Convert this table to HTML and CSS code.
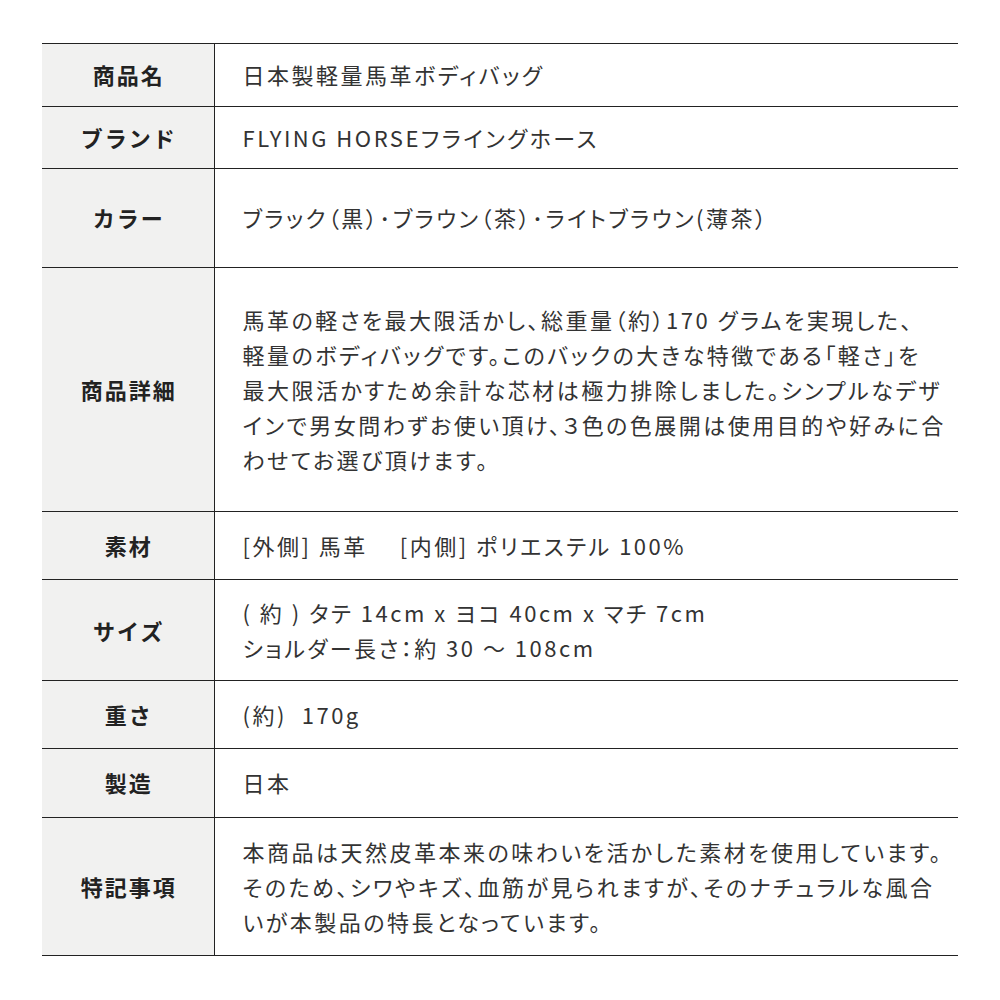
FILE: index.html
```html
<!DOCTYPE html>
<html lang="ja">
<head>
<meta charset="utf-8">
<title>商品仕様</title>
<link rel="stylesheet" href="styles.css">
</head>
<body>
<table class="spec">
  <colgroup>
    <col class="col-label">
    <col class="col-value">
  </colgroup>
  <tr class="r-tight">
    <th>商品名</th>
    <td>日本製軽量馬革ボディバッグ</td>
  </tr>
  <tr class="r-tight2">
    <th>ブランド</th>
    <td>FLYING HORSEフライングホース</td>
  </tr>
  <tr class="r-tall">
    <th>カラー</th>
    <td>ブラック（黒）･ブラウン（茶）･ライトブラウン(薄茶）</td>
  </tr>
  <tr class="r-detail">
    <th>商品詳細</th>
    <td>馬革の軽さを最大限活かし、総重量（約）170 グラムを実現した、<br>軽量のボディバッグです。このバックの大きな特徴である「軽さ」を<br>最大限活かすため余計な芯材は極力排除しました。シンプルなデザ<br>インで男女問わずお使い頂け、３色の色展開は使用目的や好みに合<br>わせてお選び頂けます。</td>
  </tr>
  <tr class="r-mat">
    <th>素材</th>
    <td>[外側] 馬革　 [内側] ポリエステル 100%</td>
  </tr>
  <tr class="r-size">
    <th>サイズ</th>
    <td>( 約 ) タテ 14cm x ヨコ 40cm x マチ 7cm<br>ショルダー長さ：約 30 ～ 108cm</td>
  </tr>
  <tr>
    <th>重さ</th>
    <td>(約)&nbsp; 170g</td>
  </tr>
  <tr class="r-made">
    <th>製造</th>
    <td>日本</td>
  </tr>
  <tr class="r-note">
    <th>特記事項</th>
    <td>本商品は天然皮革本来の味わいを活かした素材を使用しています。<br>そのため、シワやキズ、血筋が見られますが、そのナチュラルな風合<br>いが本製品の特長となっています。</td>
  </tr>
</table>
</body>
</html>
```

FILE: styles.css
```css
html, body {
  margin: 0;
  padding: 0;
  background: #ffffff;
}

body {
  padding: 43px 42px;
  font-family: "Noto Sans CJK JP", "Noto Sans", sans-serif;
  color: #333333;
}

.spec {
  width: 916px;
  table-layout: fixed;
  border-collapse: collapse;
  font-size: 22px;
  line-height: 35px;
}

.col-label {
  width: 172px;
}

.col-value {
  width: 744px;
}

.spec th,
.spec td {
  border-top: 1px solid #222222;
  border-bottom: 1px solid #222222;
  padding: 16px 4px 16px 28px;
  vertical-align: middle;
}

.spec th {
  padding-left: 2px;
  padding-right: 0;
  background: #f1f1f0;
  color: #222222;
  font-size: 22px;
  font-weight: 700;
  letter-spacing: 2px;
  text-align: center;
  border-right: 1px solid #222222;
}

.spec td {
  text-align: left;
  font-weight: 400;
  letter-spacing: 2.5px;
  font-feature-settings: "palt" 1;
  white-space: nowrap;
}

.spec .r-tight th,
.spec .r-tight td {
  padding-top: 13px;
  padding-bottom: 14px;
}

.spec .r-tight2 th,
.spec .r-tight2 td {
  padding-top: 13px;
  padding-bottom: 13px;
}

.spec .r-tall th,
.spec .r-tall td {
  padding-top: 31px;
  padding-bottom: 32px;
}

.spec .r-detail th,
.spec .r-detail td {
  padding-top: 34px;
  padding-bottom: 34px;
}

.spec .r-mat th,
.spec .r-mat td {
  padding-top: 16px;
  padding-bottom: 16px;
}

.spec .r-size th,
.spec .r-size td {
  padding-top: 15px;
  padding-bottom: 15px;
}

.spec .r-made th,
.spec .r-made td {
  padding-top: 16px;
  padding-bottom: 17px;
}

.spec .r-note th,
.spec .r-note td {
  padding-top: 16px;
  padding-bottom: 16px;
}
```
